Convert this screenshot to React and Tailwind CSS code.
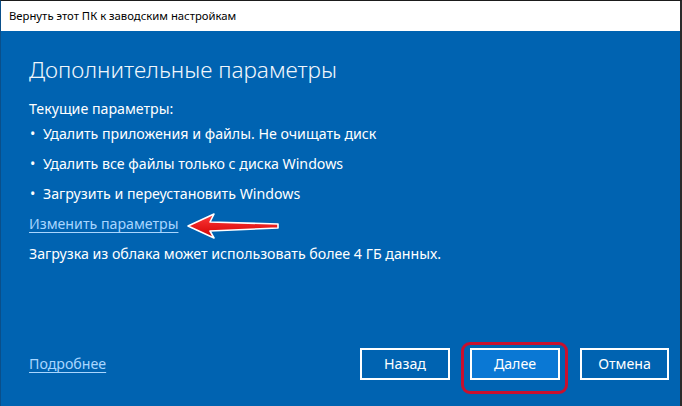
import React from "react";

const font = { fontFamily: '"Noto Sans", "Open Sans", sans-serif' };

function Arrow() {
  return (
    <svg className="absolute left-0 top-0 pointer-events-none" width="682" height="406" viewBox="0 0 682 406">
      <defs>
        <linearGradient id="ar" x1="0" y1="0" x2="0" y2="1">
          <stop offset="0" stopColor="#ff3b3b" />
          <stop offset="1" stopColor="#d10000" />
        </linearGradient>
      </defs>
      <polygon
        points="187,225 213,213 209,221 277,223 277,227 209,230 213,237"
        fill="url(#ar)"
        stroke="#ffffff"
        strokeWidth="1.6"
        strokeLinejoin="round"
      />
    </svg>
  );
}

export default function App() {
  const bullets = [
    "Удалить приложения и файлы. Не очищать диск",
    "Удалить все файлы только с диска Windows",
    "Загрузить и переустановить Windows",
  ];

  return (
    <div className="relative w-[682px] h-[406px] flex flex-col overflow-hidden border-t border-t-[#1b1b1b] border-r-2 border-r-[#2a2a2a] border-l border-l-[#0a4f8a] bg-[#0063b1]" style={font}>
      <div className="h-[30px] shrink-0 bg-white flex items-center pl-[8px] text-[11.3px] text-black">
        Вернуть этот ПК к заводским настройкам
      </div>
      <div className="flex-1 flex flex-col pl-[28px] pt-[23px] pb-[26px] text-white">
        <h1 className="text-[22.6px] font-light leading-[32px] text-[#f0f6fc]">Дополнительные параметры</h1>
        <div className="mt-[13px] text-[14.2px] leading-[20px]">Текущие параметры:</div>
        <ul className="text-[14.2px] leading-[30px]">
          {bullets.map((b) => (
            <li key={b} className="flex">
              <span className="w-[14px] pl-[1px]">•</span>
              <span>{b}</span>
            </li>
          ))}
        </ul>
        <div className="text-[14.2px] leading-[30px]">
          <span className="text-[#a9d6ff] underline underline-offset-[3px] decoration-[#a9d6ff]">Изменить параметры</span>
        </div>
        <div className="text-[14.2px] leading-[30px]">Загрузка из облака может использовать более 4 ГБ данных.</div>
        <div className="mt-auto flex items-center pr-[11px]">
          <span className="text-[14.2px] text-[#a9d6ff] underline underline-offset-[3px]">Подробнее</span>
          <div className="ml-auto flex gap-[20px]">
            <button className="w-[90px] h-[32px] border-2 border-white text-[14.2px] text-white">Назад</button>
            <button className="relative w-[90px] h-[32px] border-2 border-white bg-[#0a78d4] text-[14.2px] text-white">
              Далее
              <span className="absolute left-[-11px] right-[-10px] top-[-8px] bottom-[-16px] border-[3px] border-[#c8102e] rounded-[9px]" />
            </button>
            <button className="w-[89px] h-[32px] border-2 border-white text-[14.2px] text-white">Отмена</button>
          </div>
        </div>
      </div>
      <Arrow />
    </div>
  );
}
